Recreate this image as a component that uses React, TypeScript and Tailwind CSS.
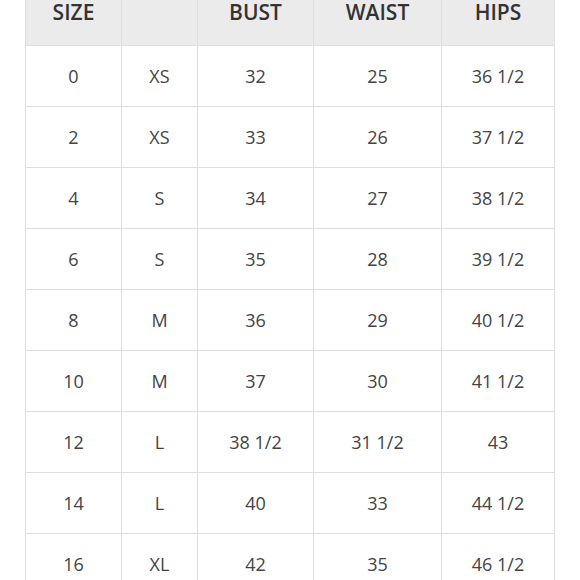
import React from "react";

const rows: string[][] = [
  ["0", "XS", "32", "25", "36 1/2"],
  ["2", "XS", "33", "26", "37 1/2"],
  ["4", "S", "34", "27", "38 1/2"],
  ["6", "S", "35", "28", "39 1/2"],
  ["8", "M", "36", "29", "40 1/2"],
  ["10", "M", "37", "30", "41 1/2"],
  ["12", "L", "38 1/2", "31 1/2", "43"],
  ["14", "L", "40", "33", "44 1/2"],
  ["16", "XL", "42", "35", "46 1/2"],
];

const headers = ["SIZE", "", "BUST", "WAIST", "HIPS"];

export default function App() {
  return (
    <div
      className="w-[580px] h-[580px] overflow-hidden bg-white"
      style={{ fontFamily: '"Open Sans", "Liberation Sans", sans-serif' }}
    >
      <div className="ml-[25px] -mt-[17px] w-[530px] grid grid-cols-[95px_75px_115px_127px_112px] gap-px bg-[#dedede] border border-[#dedede]">
        {headers.map((h, i) => (
          <div
            key={"h" + i}
            className="h-[61px] pb-[4px] bg-[#ebebeb] flex items-center justify-center text-[21px] font-semibold text-[#333]"
          >
            {h}
          </div>
        ))}
        {rows.map((r, ri) =>
          r.map((c, ci) => (
            <div
              key={ri + "-" + ci}
              className="h-[60px] bg-white flex items-center justify-center text-[18px] text-[#444]"
            >
              {c}
            </div>
          ))
        )}
      </div>
    </div>
  );
}
